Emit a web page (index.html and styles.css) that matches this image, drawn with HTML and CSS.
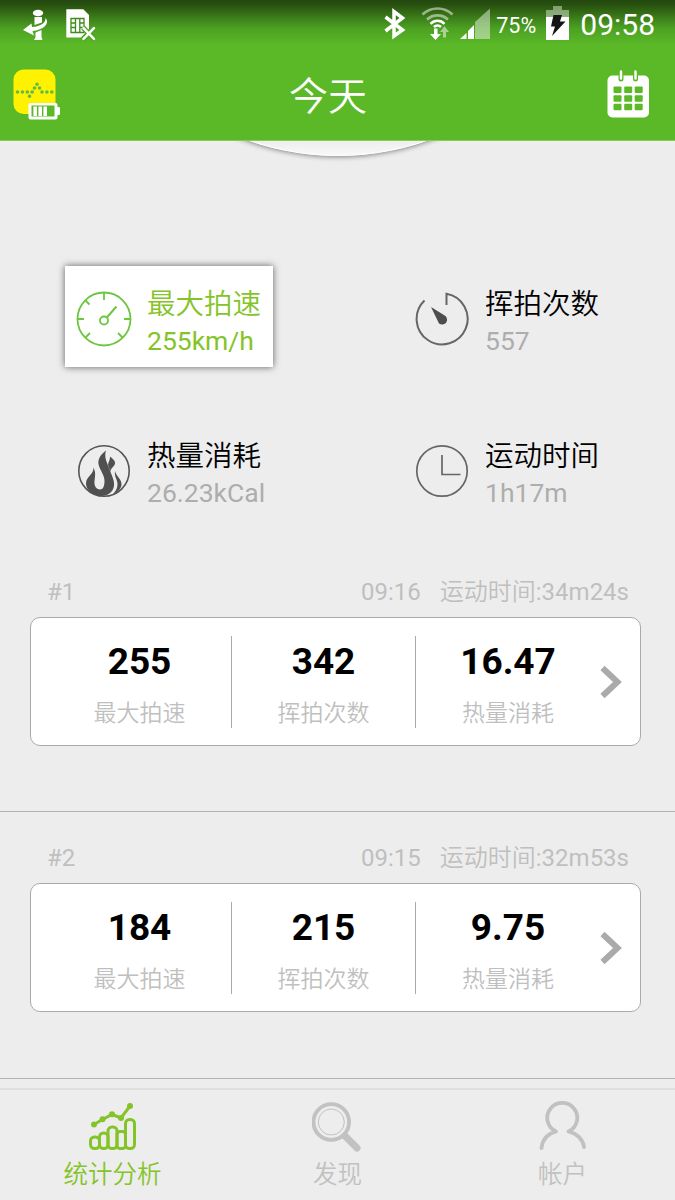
FILE: index.html
```
<!DOCTYPE html>
<html lang="zh-CN">
  <head>
    <meta charset="utf-8" />
    <title>今天</title>
    <link rel="stylesheet" href="styles.css" />
  </head>
  <body>
    <header class="header">
      <div class="status-bar">
        <svg class="status-left" width="110" height="50" viewBox="0 0 110 50">
          <g fill="#fff">
            <ellipse cx="38" cy="13" rx="5.2" ry="3.2" />
            <path d="M34.500 17h7.500v5.500l-7.500 2.500zM35.500 32.500l6-2.500v7l1 3h-8.500l1.500-2.500z" />
            <path d="M45.500 18c3 3 1.500 7.500-3 10-4 2-7 2.700-10 3l1.500 4.500-11-5.500 8.500-6.500.5 3.500c9-.5 14-4.500 13.500-9z" />
            <path d="M66.300 9.300h17l5.700 5.700v14l-8 8.500H66.300z" />
          </g>
          <path d="M71 18.500h13v14H71zM75.500 18.500v14M79.800 18.500v14M71 23h5M71 27.500h5M80 23h4M80 27.500h4" fill="none" stroke="#3f8a1a" stroke-width="1.300" />
          <path d="M83 27.500l11.500 12M94.500 27.500L83 39.500" stroke="#4ca421" stroke-width="5" />
          <path d="M83.500 28.200l10.500 10.600M94 28.200L83.500 38.800" stroke="#fff" stroke-width="2.500" stroke-linecap="round" />
        </svg>
        <div class="status-right">
          <svg width="112" height="50" viewBox="380 0 112 50">
            <path d="M385.500 17l17 13-8.500 6V11.500l8.500 6.500-17 13" fill="none" stroke="#fff" stroke-width="3.500" />
            <g fill="none" stroke-width="2.600">
              <path d="M422.500 14.500c8.500-8 21.500-8 30 0M427 19.500c6-5.500 15-5.500 21 0" stroke="#fff" stroke-opacity=".5" />
              <path d="M430.500 23.800c4-4 10-4 14 0M434 27c2-2 5-2 7 0" stroke="#fff" />
            </g>
            <path d="M434 28.500h3.500v5.500h3.500l-5.500 6-5.500-6h4z" fill="#fff" />
            <path d="M444.500 26l4.500 6h-3v5.500h-3V32h-3z" fill="#fff" fill-opacity=".5" />
            <path d="M475 39V22l15-13.500V39z" fill="#fff" fill-opacity=".45" />
            <path d="M460 39l6.500-6v6zM468 39v-8l6-6v14z" fill="#fff" />
          </svg>
          <span class="percent">75%</span>
          <svg class="battery" width="24" height="50" viewBox="545 0 24 50">
            <path d="M546 17v-7h7V6h9v4h7v7z" fill="#fff" fill-opacity=".42" />
            <path d="M546 17h23v23h-23z" fill="#fff" />
            <path d="M553.500 15h8.500l-2 6.500h5.500L552 36l3-9.500h-4z" fill="#151515" />
          </svg>
          <span class="clock">09:58</span>
        </div>
      </div>
      <div class="title-bar">
        <svg width="50" height="54" viewBox="12 68 50 54">
          <rect x="13.500" y="69.500" width="42" height="44.500" rx="10" fill="#fff200" />
          <path d="M17.500 92h15M29.500 96.200v.01M32 92v.01M34.500 88v.01M37 84.200v.01M39.500 88v.01M42 92h12" fill="none" stroke="#5fbb46" stroke-width="3.600" stroke-linecap="round" stroke-dasharray="0 4.900" />
          <rect x="28.500" y="103" width="29" height="16.500" rx="2" fill="#fff" />
          <rect x="57" y="107" width="3" height="8" rx="1" fill="#fff" />
          <rect x="31.500" y="105.500" width="23" height="11" fill="#5bb928" />
          <path d="M35.200 106.500v9.500M40.200 106.500v9.500M45.200 106.500v9.500" stroke="#fff" stroke-width="3.600" />
        </svg>
        <h1 class="title">今天</h1>
        <svg width="44" height="50" viewBox="606 70 44 50">
          <rect x="607.500" y="75.500" width="41.500" height="42" rx="5" fill="#fff" />
          <path d="M621 72v7M635.500 72v7" stroke="#5bb928" stroke-width="5" stroke-linecap="round" />
          <path d="M621 71.500v7M635.500 71.500v7" stroke="#fff" stroke-width="2.400" stroke-linecap="round" />
          <g fill="#5bb928">
            <rect x="613.500" y="86.500" width="8" height="6.500" rx="1" /><rect x="624.200" y="86.500" width="8" height="6.500" rx="1" /><rect x="634.700" y="86.500" width="8" height="6.500" rx="1" />
            <rect x="613.500" y="95.200" width="8" height="6.500" rx="1" /><rect x="624.200" y="95.200" width="8" height="6.500" rx="1" /><rect x="634.700" y="95.200" width="8" height="6.500" rx="1" />
            <rect x="613.500" y="103.800" width="8" height="6.500" rx="1" /><rect x="624.200" y="103.800" width="8" height="6.500" rx="1" /><rect x="634.700" y="103.800" width="8" height="6.500" rx="1" />
          </g>
        </svg>
      </div>
    </header>

    <main class="content">
      <!-- bottom edge of the pulled-up dial -->
      <div class="dial-clip">
        <div class="dial"></div>
      </div>

      <div class="stats">
        <div class="stat stat-active">
          <svg width="56" height="56" viewBox="0 0 56 56" fill="none" stroke="#6cc63f" stroke-width="1.800">
            <circle cx="28" cy="28" r="26.500" />
            <path d="M28 2v7M2 28h6M48 28h6M9.500 9.500l4 4M9.500 46.500l4.500-4.500M46.500 46.500L42 42" />
            <circle cx="28" cy="29.500" r="4" />
            <path d="M30.800 26.500L40.500 15.500" stroke-width="2" />
          </svg>
          <div class="stat-text">
            <div class="stat-name">最大拍速</div>
            <div class="stat-value">255km/h</div>
          </div>
        </div>
        <div class="stat">
          <svg width="56" height="56" viewBox="0 0 56 56">
            <path d="M10.500 9.500A25.500 25.500 0 1 0 32.500 2.800V14" fill="none" stroke="#666" stroke-width="2" />
            <path d="M17 16l14.500 9c4.500 5-1.500 11-6.500 7.500z" fill="#4d4d4d" />
          </svg>
          <div class="stat-text">
            <div class="stat-name">挥拍次数</div>
            <div class="stat-value">557</div>
          </div>
        </div>
        <div class="stat">
          <svg width="56" height="56" viewBox="0 0 56 56">
            <circle cx="28" cy="28" r="25.200" fill="none" stroke="#555" stroke-width="1.600" />
            <g fill="#505050">
              <path d="M30 7.500C24 12 21 17 23 23c1.500 5 5.500 9 5.500 15 0 5-1.500 8.500-4.500 8.500-4 0-6-4-5.500-8.500.5-5 1.500-8-1-13.500.5 7-7.500 9-7.500 16 0 7 7 11.500 14.500 12.500 6 .5 13-3.500 13.500-10.500.5-6-2.500-10-4-15C32 21 27.500 15 30 7.500z" />
              <path d="M34 13.500c.5 4-3.500 7-1 11 .5 1.500 1 3 1.500 4 0-4 5-5 4.500-9-.5-3-3-4-5-6z" />
              <path d="M39 28c-1 6 3 9 2.500 14-.3 4-2 6.500-4.500 9 5-2 8.500-5.500 8.500-10 0-5-5.500-8-6.500-13z" />
            </g>
          </svg>
          <div class="stat-text">
            <div class="stat-name">热量消耗</div>
            <div class="stat-value">26.23kCal</div>
          </div>
        </div>
        <div class="stat">
          <svg width="56" height="56" viewBox="0 0 56 56" fill="none" stroke="#666" stroke-width="1.700">
            <circle cx="28" cy="28" r="25.200" />
            <path d="M28 12v19.500h18.500" />
          </svg>
          <div class="stat-text">
            <div class="stat-name">运动时间</div>
            <div class="stat-value">1h17m</div>
          </div>
        </div>
      </div>

      <section class="session">
        <div class="session-head">
          <span>#1</span>
          <span class="start">09:16</span>
          <span><span class="label">运动时间</span>:34m24s</span>
        </div>
        <div class="card">
          <div class="cell"><b>255</b><span>最大拍速</span></div>
          <div class="cell"><b>342</b><span>挥拍次数</span></div>
          <div class="cell"><b>16.47</b><span>热量消耗</span></div>
          <svg class="arrow" width="22" height="34" viewBox="0 0 22 34"><path d="M2.500 3L17.500 17 2.500 31" /></svg>
        </div>
      </section>

      <section class="session">
        <div class="session-head">
          <span>#2</span>
          <span class="start">09:15</span>
          <span><span class="label">运动时间</span>:32m53s</span>
        </div>
        <div class="card">
          <div class="cell"><b>184</b><span>最大拍速</span></div>
          <div class="cell"><b>215</b><span>挥拍次数</span></div>
          <div class="cell"><b>9.75</b><span>热量消耗</span></div>
          <svg class="arrow" width="22" height="34" viewBox="0 0 22 34"><path d="M2.500 3L17.500 17 2.500 31" /></svg>
        </div>
      </section>
    </main>

    <nav class="tabs">
      <div class="tab tab-active">
        <svg width="52" height="52" viewBox="87 1100 52 52" fill="none" stroke="#84c428" stroke-width="3">
          <rect x="90.500" y="1136" width="9" height="11.500" rx="4" />
          <rect x="99.500" y="1132" width="8.500" height="15.500" rx="4" />
          <rect x="108" y="1126" width="9" height="21.500" rx="4" />
          <rect x="117" y="1130.500" width="8.500" height="17" rx="3" />
          <rect x="125.500" y="1118.500" width="9" height="29" rx="4" />
          <path d="M94 1123.500l8.500-5 9.500-5 9 3.500 9-12" />
          <g fill="#84c428" stroke="none">
            <circle cx="94" cy="1123.500" r="3" /><circle cx="102.500" cy="1118.300" r="3" /><circle cx="112" cy="1113.300" r="3" /><circle cx="121" cy="1117" r="3" /><circle cx="130" cy="1105" r="3" />
          </g>
        </svg>
        <span>统计分析</span>
      </div>
      <div class="tab">
        <svg width="52" height="52" viewBox="312 1100 52 52" fill="none" stroke="#c3c1c1">
          <circle cx="331.300" cy="1121" r="17.800" stroke-width="3.800" />
          <circle cx="331.300" cy="1121" r="13" stroke-width="1" />
          <path d="M345 1135l12 12" stroke-width="7" stroke-linecap="round" />
          <path d="M343 1133l4 4" stroke-width="5" />
        </svg>
        <span>发现</span>
      </div>
      <div class="tab">
        <svg width="52" height="52" viewBox="537 1100 52 52" fill="none" stroke="#c1c1c1" stroke-width="3.800" stroke-linecap="round" stroke-linejoin="round">
          <path d="M541.500 1147c1-8.500 6.500-14.500 14.500-16.500a15 15 0 1 1 12.500 0c8.500 2 14.500 8 15.500 15.500" />
        </svg>
        <span>帐户</span>
      </div>
    </nav>
  </body>
</html>
```
FILE: styles.css
```
* {
  box-sizing: border-box;
}

body {
  margin: 0;
  height: 1200px;
  display: flex;
  flex-direction: column;
  overflow: hidden;
  background: #ededed;
  font-family: Roboto, "Noto Sans CJK SC", sans-serif;
}

svg {
  display: block;
  flex-shrink: 0;
}

.header {
  height: 141px;
  background: linear-gradient(#234711 0, #28510f 5px, #4ca022 28px, #5bb928 45px);
  border-bottom: 1px solid #86cb62;
  color: #fff;
}

.status-bar {
  height: 50px;
  display: flex;
  justify-content: space-between;
}

.status-right {
  display: flex;
  align-items: center;
  padding-right: 20px;
}

.percent {
  width: 53px;
  padding-left: 4px;
  font-size: 21.500px;
}

.clock {
  margin-left: 11px;
  font-size: 30px;
  line-height: 50px;
}

.title-bar {
  height: 90px;
  display: flex;
  align-items: center;
  justify-content: space-between;
  padding: 0 25px 0 12px;
}

.title {
  margin: 4px 12px 0 0;
  font-size: 39px;
  font-weight: 350;
  line-height: 86px;
}

.content {
  flex: 1;
}

.dial-clip {
  height: 30px;
  display: flex;
  align-items: flex-end;
  justify-content: center;
  overflow: hidden;
}

.dial {
  width: 538px;
  height: 538px;
  flex-shrink: 0;
  margin-bottom: 15px;
  border-radius: 50%;
  background: linear-gradient(#e9e9e9 96%, #f8f8f8);
  border: 1px solid #fff;
  box-shadow: 0 1px 5px rgba(0, 0, 0, 0.45);
}

.stats {
  display: grid;
  grid-template-columns: 338px 209px;
  grid-template-rows: 101px 101px;
  row-gap: 51px;
  padding: 95px 0 50px 65px;
}

.stat {
  width: 208px;
  display: flex;
  align-items: center;
  padding: 4px 0 0 11px;
}

.stat-active {
  background: #fff;
  box-shadow: 0 0 7px rgba(0, 0, 0, 0.6);
}

.stat-text {
  margin: 8px 0 0 15px;
  white-space: nowrap;
}

.stat-name {
  font-size: 28.500px;
  font-weight: 350;
  line-height: 36px;
  color: #000;
}

.stat-value {
  font-size: 26.500px;
  line-height: 36px;
  color: #adadad;
}

.stat-active .stat-name,
.stat-active .stat-value {
  color: #84c428;
}

.session {
  height: 266.500px;
  padding: 0 34px 0 30px;
  border-bottom: 1px solid #b2b2b2;
}

.session:first-of-type {
  height: 243px;
}

.session-head {
  height: 71px;
  display: flex;
  align-items: flex-end;
  padding: 0 12px 7px 17px;
  font-size: 24px;
  line-height: 36px;
  color: #bfbfbf;
}

.session:first-of-type .session-head {
  height: 48px;
}

.label {
  font-weight: 350;
}

.start {
  margin-left: auto;
  margin-right: 19px;
}

.card {
  height: 129px;
  display: flex;
  align-items: center;
  padding-left: 17px;
  background: #fff;
  border: 1px solid #aaa;
  border-radius: 10px;
}

.cell {
  width: 184px;
  height: 92px;
  display: flex;
  flex-direction: column;
  align-items: center;
  border-right: 1px solid #aaa;
}

.cell:nth-child(3) {
  border-right: none;
}

.cell b {
  margin-top: 3px;
  font-size: 37px;
  line-height: 46px;
}

.cell span {
  margin-top: 12px;
  font-size: 23px;
  font-weight: 350;
  line-height: 34px;
  color: #bfbfbf;
}

.arrow path {
  fill: none;
  stroke: #aaa;
  stroke-width: 6;
}

.tabs {
  height: 112px;
  display: flex;
  border-top: 2px solid #e0e0e0;
  background: #ededed;
}

.tab {
  flex: 1;
  display: flex;
  flex-direction: column;
  align-items: center;
  padding-top: 11px;
  font-size: 24.500px;
  font-weight: 350;
  line-height: 38px;
  color: #c1c1c1;
}

.tab span {
  margin-top: 3px;
}

.tab-active {
  color: #84c428;
}
```
